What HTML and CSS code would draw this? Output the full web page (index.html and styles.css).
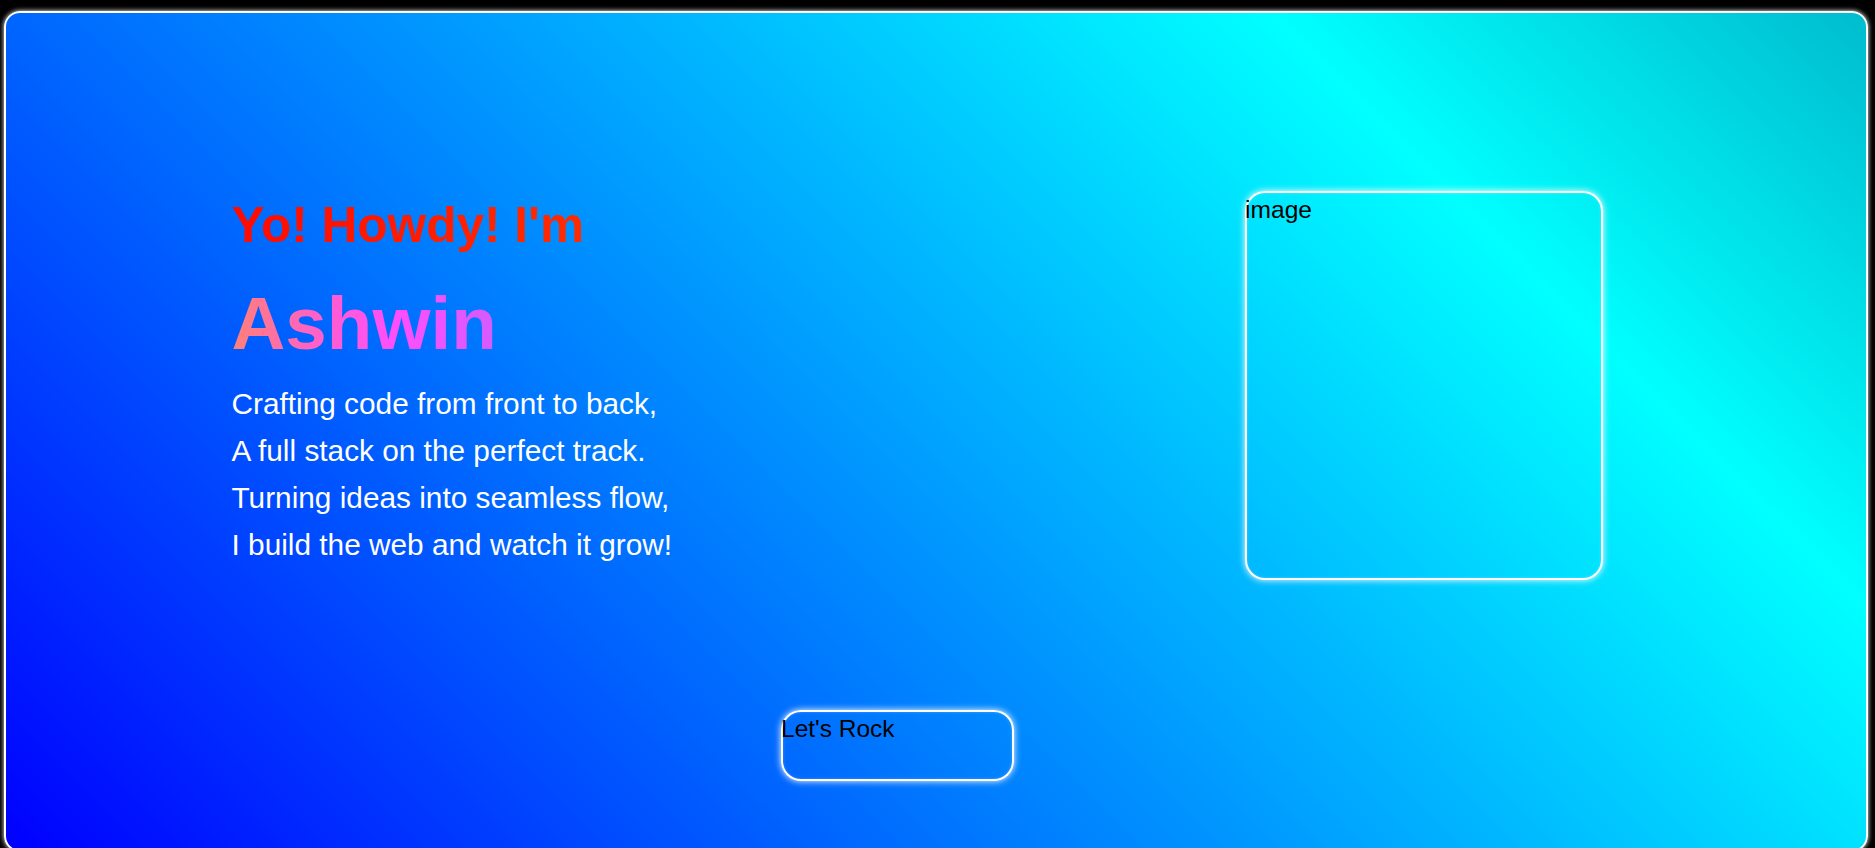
FILE: index.html
```html
<!DOCTYPE html>
<html lang="en">
<head>
<meta charset="utf-8">
<title>Ashwin</title>
<link rel="stylesheet" href="styles.css">
</head>
<body>
  <section class="hero">
    <div class="hero-row">
      <div class="intro">
        <h2 class="greet">Yo! Howdy! I'm</h2>
        <h1 class="name">Ashwin</h1>
        <p class="poem">Crafting code from front to back,<br>A full stack on the perfect track.<br>Turning ideas into seamless flow,<br>I build the web and watch it grow!</p>
      </div>
      <div class="photo">image</div>
    </div>
    <div class="actions">
      <div class="rock" role="button">Let's Rock</div>
    </div>
  </section>
</body>
</html>
```
FILE: styles.css
```css
html, body {
  margin: 0;
  padding: 0;
  background: #000;
}
body {
  font-family: "Liberation Sans", Arial, sans-serif;
}
.hero {
  box-sizing: border-box;
  margin: 11px 0 0 4px;
  width: 1864px;
  height: 841px;
  padding: 178px 263px 0 225.5px;
  border: 2px solid #fff;
  border-radius: 16px;
  box-shadow: 0 0 5px #fff;
  background: linear-gradient(45deg, #0000ff 0%, #00ffff 78%, #00bccf 100%);
}
.hero-row {
  display: flex;
  align-items: flex-start;
}
.intro {
  padding-top: 3.6px;
}
.greet {
  margin: 0;
  font-size: 49.6px;
  line-height: 60px;
  font-weight: bold;
  width: fit-content;
  background: linear-gradient(90deg, #ff0a00, #ff2c00);
  -webkit-background-clip: text;
  background-clip: text;
  color: transparent;
}
.name {
  margin: 23.7px 0 0 0;
  font-size: 74.6px;
  line-height: 90px;
  font-weight: bold;
  width: fit-content;
  background: linear-gradient(90deg, #ff8078 0%, #ff60c8 32%, #ff4dff 62%, #d35cff 100%);
  -webkit-background-clip: text;
  background-clip: text;
  color: transparent;
}
.poem {
  margin: 11.35px 0 0 0;
  font-size: 29.8px;
  line-height: 47px;
  color: #fff;
}
.photo {
  box-sizing: border-box;
  margin-left: auto;
  width: 358px;
  height: 389px;
  padding-top: 4.7px;
  border-radius: 20px;
  font-size: 24.6px;
  line-height: normal;
  color: #000;
  box-shadow: inset 0 0 0 2px #fff, inset 0 0 4px rgba(255,255,255,0.7), 0 0 7px #fff;
}
.actions {
  margin-top: 130px;
  padding-left: 549.5px;
}
.rock {
  box-sizing: border-box;
  width: 233px;
  height: 71px;
  padding-top: 4.8px;
  border-radius: 20px;
  font-size: 24.5px;
  line-height: normal;
  color: #000;
  cursor: pointer;
  box-shadow: inset 0 0 0 2px #fff, inset 0 0 4px rgba(255,255,255,0.7), 0 0 7px #fff;
}
```
